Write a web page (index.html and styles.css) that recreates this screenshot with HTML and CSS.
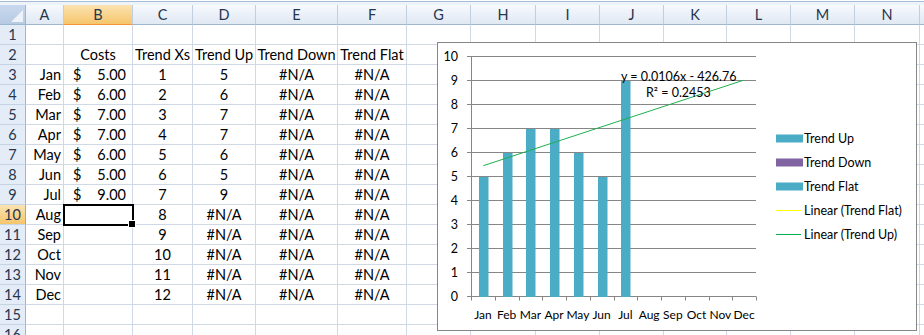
FILE: index.html
```html
<!DOCTYPE html>
<html lang="en">
<head>
    <meta charset="UTF-8">
    <title>Trend Chart - Sheet1</title>
    <link rel="stylesheet" href="styles.css">
</head>
<body>
    <div class="sheet">
        <div class="topbar"></div>
        <div class="grid">
            <!-- cells are generated below -->
        </div>
        <div class="chart">
            <svg class="plot" width="478" height="287" viewBox="438 43 478 287"></svg>
        </div>
    </div>
    <script>
        const months = ['Jan', 'Feb', 'Mar', 'Apr', 'May', 'Jun', 'Jul', 'Aug', 'Sep', 'Oct', 'Nov', 'Dec'];
        const costs = [5, 6, 7, 7, 6, 5, 9];
        const letters = 'ABCDEFGHIJKLMNO'.split('');

        const grid = document.querySelector('.grid');
        const plot = document.querySelector('.plot');

        function cell(text, cls) {
            return `<div class="cell ${cls || ''}">${text || ''}</div>`;
        }

        function rowCells(r) {
            if (r === 2) {
                return [cell(), cell('Costs', 'c'), cell('Trend Xs', 'c'), cell('Trend Up', 'c'),
                        cell('Trend Down', 'c'), cell('Trend Flat', 'c')];
            }
            if (r < 3 || r > 14) return [];
            const i = r - 3;
            const cost = i < costs.length
                ? `<div class="cell acct"><span>$</span><span>${costs[i].toFixed(2)}</span></div>`
                : cell('', r === 10 ? 'selected' : '');
            return [
                cell(months[i], 'r'),
                cost,
                cell(i + 1, 'c'),
                cell(i < costs.length ? costs[i] : '#N/A', 'c'),
                cell('#N/A', 'c'),
                cell('#N/A', 'c')
            ];
        }

        function buildGrid() {
            let html = '<div class="cell corner"></div>';
            letters.forEach(l => {
                // column O is only a sliver at the window edge
                html += cell(l === 'O' ? '' : l, 'col-head' + (l === 'B' ? ' active' : ''));
            });
            for (let r = 1; r <= 16; r++) {
                html += cell(r, 'row-head' + (r === 10 ? ' active' : ''));
                const cells = rowCells(r);
                letters.forEach((l, i) => {
                    html += cells[i] || cell();
                });
            }
            grid.innerHTML = html;
        }

        function buildChart() {
            const left = 471, right = 756, base = 296.5, unit = 24;
            const step = (right - left) / 12;
            let svg = '';

            // gridlines + value labels
            for (let v = 0; v <= 10; v++) {
                const y = base - v * unit;
                svg += `<line class="grid-line" x1="${left - 4}" y1="${y}" x2="${right}" y2="${y}"/>`;
                svg += `<text x="458" y="${y + 4.5}" text-anchor="end">${v}</text>`;
            }
            svg += `<line class="grid-line" x1="${left + 0.5}" y1="${base - 10 * unit}" x2="${left + 0.5}" y2="${base}"/>`;

            // category ticks + labels
            for (let i = 0; i <= 12; i++) {
                const x = Math.round(left + i * step) + 0.5;
                svg += `<line class="grid-line" x1="${x}" y1="${base}" x2="${x}" y2="${base + 4}"/>`;
            }
            months.forEach((m, i) => {
                const cx = left + (i + 0.5) * step;
                svg += `<text class="cat" x="${cx}" y="318.5" text-anchor="middle">${m}</text>`;
            });

            // bars
            costs.forEach((v, i) => {
                const cx = left + (i + 0.5) * step;
                const h = v * unit;
                svg += `<rect class="bar" x="${Math.round(cx - 4)}" y="${base - h + 0.5}" width="9.5" height="${h}"/>`;
            });

            // trendline + equation
            svg += '<line class="trend" x1="483.3" y1="165.7" x2="743.3" y2="80.3"/>';
            svg += '<text x="621" y="80.5">y = 0.0106x - 426.76</text>';
            svg += '<text x="646" y="96.5">R² = 0.2453</text>';

            // legend
            const legend = [
                { label: 'Trend Up', color: '#4bacc6', box: true },
                { label: 'Trend Down', color: '#8064a2', box: true },
                { label: 'Trend Flat', color: '#4bacc6', box: true },
                { label: 'Linear (Trend Flat)', color: '#ffff00' },
                { label: 'Linear (Trend Up)', color: '#00b050' }
            ];
            legend.forEach((item, i) => {
                const y = 138.5 + i * 24;
                if (item.box) {
                    svg += `<rect x="776" y="${y - 4}" width="27" height="8" fill="${item.color}"/>`;
                } else {
                    svg += `<line x1="776" y1="${y}" x2="801" y2="${y}" stroke="${item.color}" stroke-width="1"/>`;
                }
                svg += `<text x="804" y="${y + 4.5}">${item.label}</text>`;
            });

            plot.innerHTML = svg;
        }

        buildGrid();
        buildChart();
    </script>
</body>
</html>
```

FILE: styles.css
```css
* {
    box-sizing: border-box;
    margin: 0;
    padding: 0;
}
body {
    font-family: Lato, "Liberation Sans", sans-serif;
    font-size: 14.5px;
    color: #000;
    background-color: #fff;
    overflow: hidden;
}
.sheet {
    position: relative;
    width: 924px;
    height: 335px;
    overflow: hidden;
}
.topbar {
    height: 5px;
    background: linear-gradient(#fff 0 1px, #a5bdd7 1px 2px, #eef3fa 2px);
}
.grid {
    display: grid;
    grid-template-columns: 26px 38px 69px 60px 63px 82px 69px 64px 65px 64px 64px 63px 64px 64px 65px 64px;
    grid-auto-rows: 20px;
}
.cell {
    position: relative;
    border-right: 1px solid #d0d7e5;
    border-bottom: 1px solid #d0d7e5;
    line-height: 19px;
    white-space: nowrap;
    overflow: hidden;
}
.cell.r {
    text-align: right;
    padding-right: 2px;
}
.cell.c {
    text-align: center;
}
.cell.acct {
    display: flex;
    justify-content: space-between;
    padding: 0 6px 0 9px;
}
.cell.selected {
    overflow: visible;
    outline: 2px solid #000;
    outline-offset: -1px;
    z-index: 1;
}
.cell.selected::after {
    content: '';
    position: absolute;
    right: -4px;
    bottom: -4px;
    width: 6px;
    height: 6px;
    background-color: #000;
    border: 1px solid #fff;
}
.corner {
    background: linear-gradient(#c9d9ee, #b6cae3);
    border-right: 1px solid #9eb6ce;
    border-bottom: 1px solid #9eb6ce;
}
.corner::after {
    content: '';
    position: absolute;
    right: 2px;
    bottom: 2px;
    border-left: 12px solid transparent;
    border-bottom: 12px solid #eef3f9;
}
.col-head {
    background: linear-gradient(#f7f9fd, #e0e8f3);
    border-right: 1px solid #c0cfe0;
    border-bottom: 1px solid #9eb6ce;
    text-align: center;
    color: #26364f;
}
.row-head {
    background-color: #e4ecf7;
    border-right: 1px solid #9eb6ce;
    border-bottom: 1px solid #c5d3e3;
    text-align: center;
    color: #26364f;
}
.col-head.active {
    background: linear-gradient(#fbe3b0, #f6c56c);
    border-bottom: 1px solid #f29536;
}
.row-head.active {
    background: linear-gradient(#fbe3b0, #f6c56c);
    border-right: 1px solid #f29536;
}
.chart {
    position: absolute;
    left: 437px;
    top: 42px;
    width: 480px;
    height: 289px;
    border: 1px solid #868686;
    background-color: #fff;
    z-index: 2;
}
.plot {
    display: block;
}
.plot text {
    font-family: Lato, "Liberation Sans", sans-serif;
    font-size: 12.5px;
    fill: #000;
}
.plot text.cat {
    font-size: 12px;
}
.grid-line {
    stroke: #868686;
    stroke-width: 1;
}
.bar {
    fill: #4bacc6;
}
.trend {
    stroke: #1fae4f;
    stroke-width: 1;
}
```
